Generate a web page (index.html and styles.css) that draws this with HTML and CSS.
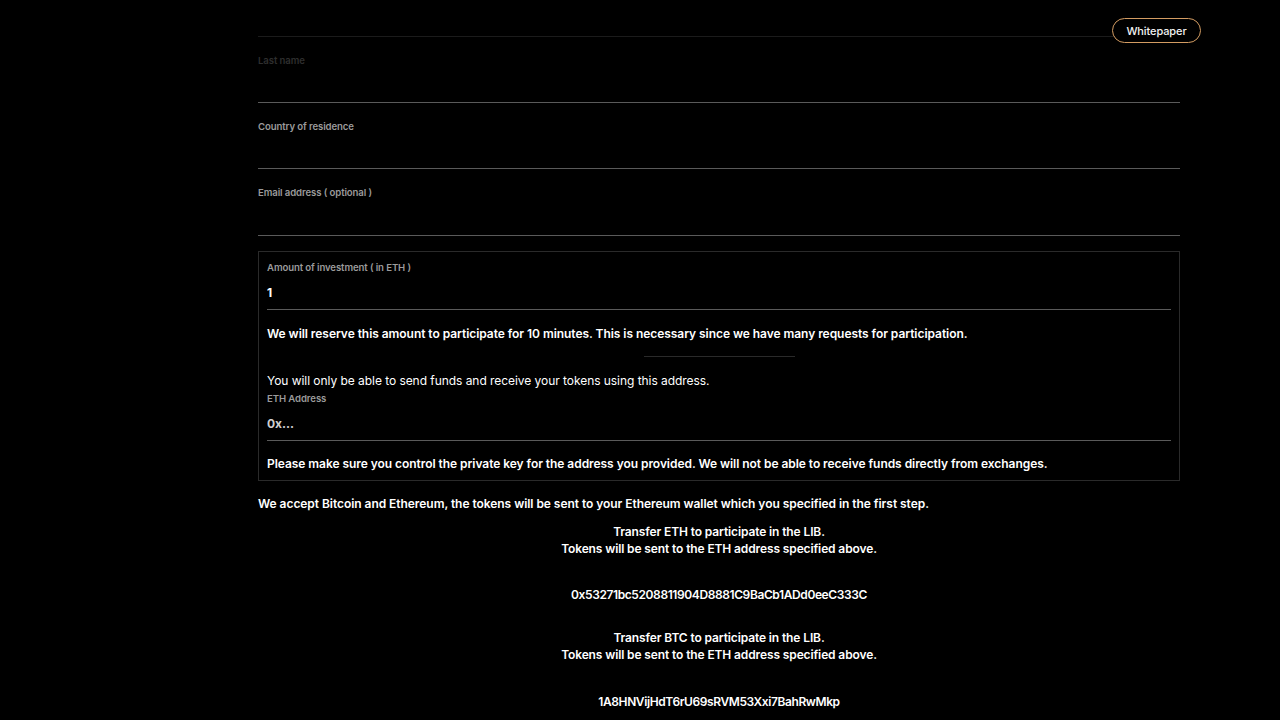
FILE: index.html
```html
<!DOCTYPE html>
<html lang="en">
<head>
<meta charset="utf-8">
<title>Participate</title>
<link rel="stylesheet" href="styles.css">
</head>
<body>
<a class="whitepaper" href="#">Whitepaper</a>
<main class="page">
  <div class="topline"></div>
  <div class="field faded">
    <label class="label">Last name</label>
    <div class="input"></div>
  </div>
  <div class="field">
    <label class="label">Country of residence</label>
    <div class="input"></div>
  </div>
  <div class="field email">
    <label class="label">Email address ( optional )</label>
    <div class="input"></div>
  </div>

  <section class="box">
    <label class="label">Amount of investment ( in ETH )</label>
    <div class="input value">1</div>
    <p class="strong note-1">We will reserve this amount to participate for 10 minutes. This is necessary since we have many requests for participation.</p>
    <div class="divider"></div>
    <p class="regular note-2">You will only be able to send funds and receive your tokens using this address.</p>
    <label class="label eth-label">ETH Address</label>
    <div class="input value placeholder">0x...</div>
    <p class="strong note-3">Please make sure you control the private key for the address you provided. We will not be able to receive funds directly from exchanges.</p>
  </section>

  <p class="strong accept">We accept Bitcoin and Ethereum, the tokens will be sent to your Ethereum wallet which you specified in the first step.</p>

  <div class="transfer">
    <p class="strong t-lines">Transfer ETH to participate in the LIB.<br>Tokens will be sent to the ETH address specified above.</p>
    <p class="strong t-addr">0x53271bc5208811904D8881C9BaCb1ADd0eeC333C</p>
    <p class="strong t-lines second">Transfer BTC to participate in the LIB.<br>Tokens will be sent to the ETH address specified above.</p>
    <p class="strong t-addr last">1A8HNVijHdT6rU69sRVM53Xxi7BahRwMkp</p>
  </div>
</main>
</body>
</html>
```
FILE: styles.css
```css
* { box-sizing: border-box; }
html, body { margin: 0; padding: 0; background: #000; }
body {
  font-family: "Inter", "Noto Sans", sans-serif;
  color: #fff;
  height: 720px;
  overflow: hidden;
}
p { margin: 0; }

.whitepaper {
  position: absolute;
  left: 1112px;
  top: 18px;
  width: 89px;
  height: 25px;
  border: 1.5px solid #d39c62;
  border-radius: 13px;
  background: #000;
  color: #f2f2f2;
  font-size: 11px;
  font-weight: 500;
  letter-spacing: -0.1px;
  text-decoration: none;
  display: flex;
  align-items: center;
  justify-content: center;
}

.page {
  width: 922px;
  margin-left: 258px;
  padding-top: 36px;
}
.topline { height: 1px; background: #1b1b1b; }

.field { margin-top: 16px; }
.label {
  display: block;
  padding-top: 1px;
  font-size: 9.6px;
  line-height: 14px;
  font-weight: 600;
  color: #9b9b9b;
  letter-spacing: -0.1px;
}
.faded .label { color: #2e2e2e; }
.input {
  height: 35px;
  border-bottom: 1px solid #5a5a5a;
  display: flex;
  align-items: center;
}
.field.email .input { height: 36px; }

.box {
  margin-top: 15px;
  border: 1px solid #2a2a2a;
  padding: 8px 8px 7px 8px;
}
.value {
  font-size: 12px;
  font-weight: 700;
  color: #fff;
  padding-top: 1px;
}
.placeholder { color: #cfcfcf; }

.strong {
  font-size: 12px;
  line-height: 18px;
  font-weight: 600;
  letter-spacing: -0.05px;
  color: #fff;
}
.regular {
  font-size: 12px;
  line-height: 18px;
  font-weight: 400;
  letter-spacing: -0.05px;
  color: #fff;
}
.note-1 { margin-top: 15px; }
.divider {
  width: 151px;
  height: 1px;
  background: #2a2a2a;
  margin: 13px auto 0;
}
.note-2 { margin-top: 15px; }
.eth-label { margin-top: 1px; }
.note-3 { margin-top: 14px; }

.accept { margin-top: 14px; }

.transfer { text-align: center; }
.t-lines { line-height: 17px; margin-top: 10px; letter-spacing: -0.12px; }
.t-lines.second { margin-top: 26px; }
.t-addr { margin-top: 29px; line-height: 17px; letter-spacing: -0.4px; }
.t-addr.last { margin-top: 30px; }
```
